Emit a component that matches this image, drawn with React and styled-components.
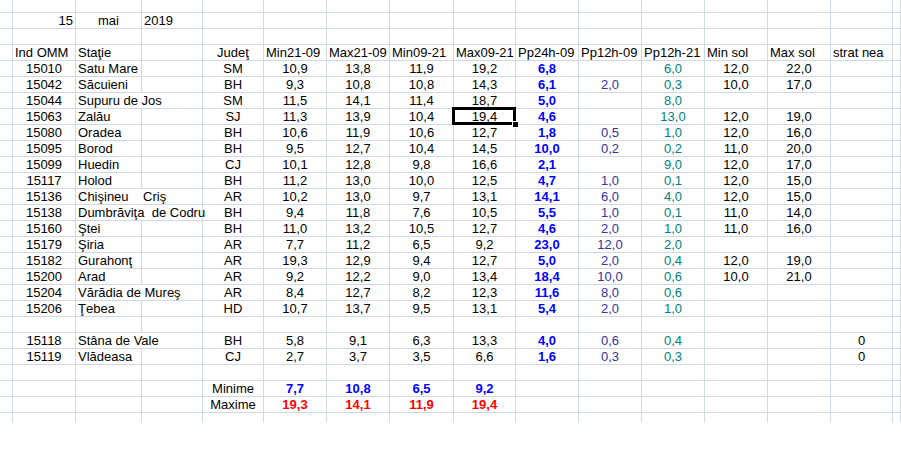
import React from 'react'
import styled, { createGlobalStyle, css } from 'styled-components'

const GlobalStyle = createGlobalStyle`
  html, body {
    margin: 0;
    padding: 0;
    background: #fff;
  }
  body {
    font-family: "Liberation Sans", Arial, sans-serif;
  }
`

// measured widths of the visible columns, gridline included
const COLS = [13, 63, 66, 61, 61, 63, 63, 64, 62, 63, 63, 63, 63, 63, 62]
const GRID = '#d0d7e5'

const Sheet = styled.div`
  display: grid;
  grid-template-columns: ${COLS.map(w => w + 'px').join(' ')} 1fr;
  grid-template-rows: 13px repeat(25, 16px) 9px;
  width: 901px;
  font-size: 13px;
  color: #000;
`

const Row = styled.div`
  display: contents;
`

const tones = {
  rain: css`color: #0000ff; font-weight: bold;`,
  night: css`color: #333399;`,
  day: css`color: #008080;`,
  min: css`color: #0000ff; font-weight: bold;`,
  max: css`color: #ff0000; font-weight: bold;`,
}

const Cell = styled.div`
  box-sizing: border-box;
  position: relative;
  border-right: 1px solid ${GRID};
  border-bottom: ${({ $open }) => ($open ? 'none' : `1px solid ${GRID}`)};
  grid-column: ${({ $span }) => ($span ? `span ${$span}` : 'auto')};
  padding: 0 2px;
  line-height: 15px;
  white-space: pre;
  overflow: visible;
  text-align: ${({ $align }) => $align || 'left'};
  ${({ $tone }) => $tone && tones[$tone]}

  ${({ $selected }) => $selected && css`
    &::after {
      content: '';
      position: absolute;
      left: -2px;
      top: -2px;
      width: calc(100% + 3px);
      height: calc(100% + 3px);
      box-sizing: border-box;
      border: 3px solid #000;
      z-index: 1;
    }
    &::before {
      content: '';
      position: absolute;
      right: -3px;
      bottom: -3px;
      width: 5px;
      height: 5px;
      background: #000;
      box-shadow: 0 0 0 1px #fff;
      z-index: 2;
    }
  `}
`

const HEADERS = ['Min21-09', 'Max21-09', 'Min09-21', 'Max09-21', 'Pp24h-09', 'Pp12h-09', 'Pp12h-21', 'Min sol', 'Max sol', 'strat nea']

// id, name, spills into next column, county, temps x4, pp24, pp12-09, pp12-21, min sol, max sol, snow
const STATIONS = [
  ['15010', 'Satu Mare', false, 'SM', ['10,9', '13,8', '11,9', '19,2'], '6,8', '', '6,0', '12,0', '22,0', ''],
  ['15042', 'Săcuieni', false, 'BH', ['9,3', '10,8', '10,8', '14,3'], '6,1', '2,0', '0,3', '10,0', '17,0', ''],
  ['15044', 'Supuru de Jos', true, 'SM', ['11,5', '14,1', '11,4', '18,7'], '5,0', '', '8,0', '', '', ''],
  ['15063', 'Zalău', false, 'SJ', ['11,3', '13,9', '10,4', '19,4'], '4,6', '', '13,0', '12,0', '19,0', ''],
  ['15080', 'Oradea', false, 'BH', ['10,6', '11,9', '10,6', '12,7'], '1,8', '0,5', '1,0', '12,0', '16,0', ''],
  ['15095', 'Borod', false, 'BH', ['9,5', '12,7', '10,4', '14,5'], '10,0', '0,2', '0,2', '11,0', '20,0', ''],
  ['15099', 'Huedin', false, 'CJ', ['10,1', '12,8', '9,8', '16,6'], '2,1', '', '9,0', '12,0', '17,0', ''],
  ['15117', 'Holod', false, 'BH', ['11,2', '13,0', '10,0', '12,5'], '4,7', '1,0', '0,1', '12,0', '15,0', ''],
  ['15136', 'Chişineu    Criş', true, 'AR', ['10,2', '13,0', '9,7', '13,1'], '14,1', '6,0', '4,0', '12,0', '15,0', ''],
  ['15138', 'Dumbrăviţa  de Codru', true, 'BH', ['9,4', '11,8', '7,6', '10,5'], '5,5', '1,0', '0,1', '11,0', '14,0', ''],
  ['15160', 'Ştei', false, 'BH', ['11,0', '13,2', '10,5', '12,7'], '4,6', '2,0', '1,0', '11,0', '16,0', ''],
  ['15179', 'Şiria', false, 'AR', ['7,7', '11,2', '6,5', '9,2'], '23,0', '12,0', '2,0', '', '', ''],
  ['15182', 'Gurahonţ', false, 'AR', ['19,3', '12,9', '9,4', '12,7'], '5,0', '2,0', '0,4', '12,0', '19,0', ''],
  ['15200', 'Arad', false, 'AR', ['9,2', '12,2', '9,0', '13,4'], '18,4', '10,0', '0,6', '10,0', '21,0', ''],
  ['15204', 'Vărădia de Mureş', true, 'AR', ['8,4', '12,7', '8,2', '12,3'], '11,6', '8,0', '0,6', '', '', ''],
  ['15206', 'Ţebea', false, 'HD', ['10,7', '13,7', '9,5', '13,1'], '5,4', '2,0', '1,0', '', '', ''],
  null,
  ['15118', 'Stâna de Vale', true, 'BH', ['5,8', '9,1', '6,3', '13,3'], '4,0', '0,6', '0,4', '', '', '0'],
  ['15119', 'Vlădeasa', false, 'CJ', ['2,7', '3,7', '3,5', '6,6'], '1,6', '0,3', '0,3', '', '', '0'],
]

const SUMMARY = [
  ['Minime', 'min', ['7,7', '10,8', '6,5', '9,2']],
  ['Maxime', 'max', ['19,3', '14,1', '11,9', '19,4']],
]

const blanks = (n, open) => Array.from({ length: n }, (_, i) => <Cell key={i} $open={open} />)

const EmptyRow = ({ open }) => <Row>{blanks(16, open)}</Row>

const StationRow = ({ data, selectedCol }) => {
  const [id, name, wide, county, temps, pp24, pp09, pp21, minSol, maxSol, snow] = data
  return (
    <Row>
      <Cell />
      <Cell $align="center">{id}</Cell>
      {wide ? (
        <Cell $span={2}>{name}</Cell>
      ) : (
        <>
          <Cell>{name}</Cell>
          <Cell />
        </>
      )}
      <Cell $align="center">{county}</Cell>
      {temps.map((t, i) => (
        <Cell key={i} $align="center" $selected={selectedCol === i}>{t}</Cell>
      ))}
      <Cell $align="center" $tone="rain">{pp24}</Cell>
      <Cell $align="center" $tone="night">{pp09}</Cell>
      <Cell $align="center" $tone="day">{pp21}</Cell>
      <Cell $align="center">{minSol}</Cell>
      <Cell $align="center">{maxSol}</Cell>
      <Cell $align="center">{snow}</Cell>
      <Cell />
    </Row>
  )
}

const App = () => {
  return (
    <>
      <GlobalStyle />
      <Sheet>
        <EmptyRow />
        <Row>
          <Cell />
          <Cell $align="right">15</Cell>
          <Cell $align="center">mai</Cell>
          <Cell>2019</Cell>
          {blanks(12)}
        </Row>
        <EmptyRow />
        <Row>
          <Cell />
          <Cell>Ind OMM</Cell>
          <Cell>Staţie</Cell>
          <Cell />
          <Cell $align="center">Judeţ</Cell>
          {HEADERS.map(h => <Cell key={h}>{h}</Cell>)}
          <Cell />
        </Row>
        {STATIONS.map((s, i) =>
          s ? <StationRow key={i} data={s} selectedCol={s[0] === '15063' ? 3 : -1} /> : <EmptyRow key={i} />
        )}
        <EmptyRow />
        {SUMMARY.map(([label, tone, vals]) => (
          <Row key={label}>
            <Cell />
            <Cell />
            <Cell />
            <Cell />
            <Cell $align="center">{label}</Cell>
            {vals.map((v, i) => <Cell key={i} $align="center" $tone={tone}>{v}</Cell>)}
            {blanks(7)}
          </Row>
        ))}
        <EmptyRow open />
      </Sheet>
    </>
  )
}

export default App
